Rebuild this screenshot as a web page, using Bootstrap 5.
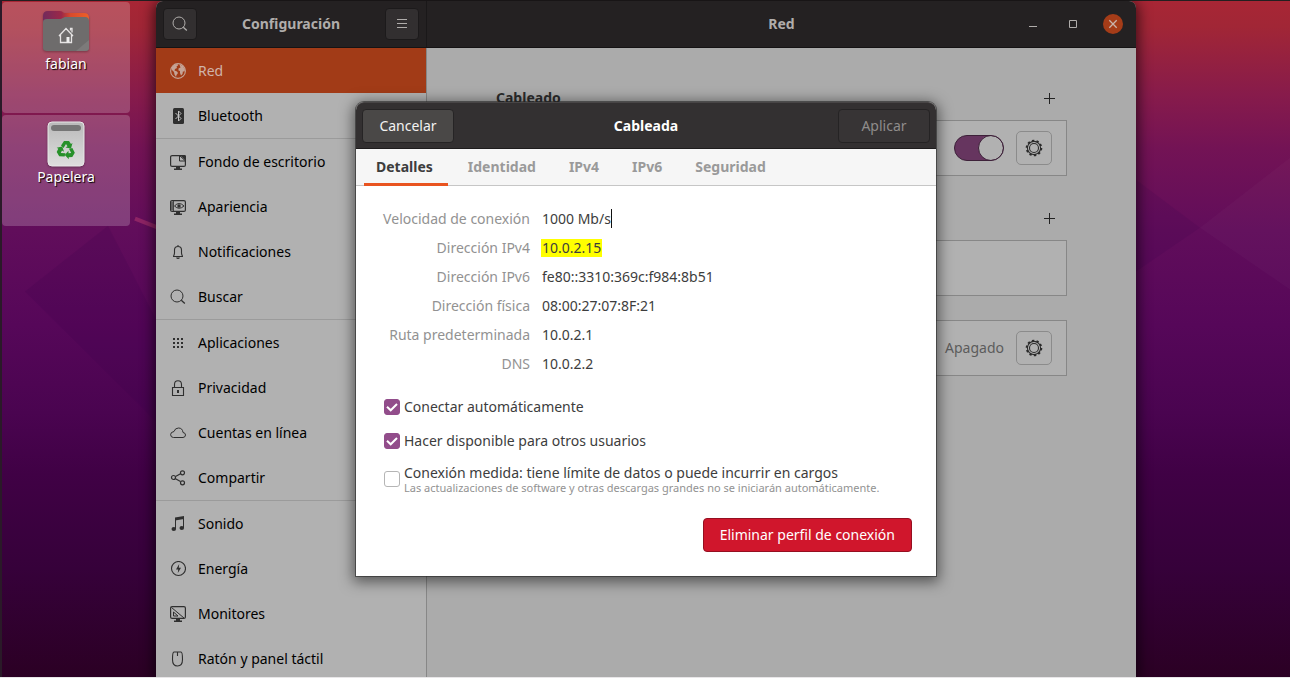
<!DOCTYPE html>
<html lang="es">
<head>
<meta charset="utf-8">
<meta name="viewport" content="width=device-width, initial-scale=1">
<title>Configuración - Red</title>
<link rel="stylesheet" href="https://cdn.jsdelivr.net/npm/bootstrap@5.3.0/dist/css/bootstrap.min.css">
<style>
  body { font: 14px/20px "Noto Sans", "Open Sans", sans-serif; color: #000; background: #2c0025; }
  .desktop {
    height: 100vh; padding: 1px 154px 0 2px; overflow: hidden;
    border-bottom: 1px solid #e8e6e8;
    background: linear-gradient(180deg, #a82635 0%, #a12636 4%, #871b4b 14%, #731355 22%, #610d5b 34%, #560759 48%, #4a0450 61%, #400145 70%, #36013a 84%, #2b0024 100%);
  }
  .topline { height: 1px; background: #231f20; }
  .edge { width: 2px; background: #2a1a28; }
  .facets { width: 100%; height: 100%; }
  .shortcuts { width: 154px; gap: 2px; padding-top: 1px; }
  .shortcut { width: 128px; height: 111px; background: rgba(255,255,255,.2); border-radius: 4px; color: #fff; text-shadow: 1px 1px 1px #000; padding-top: 6px; }
  .shortcut svg { filter: drop-shadow(0 1px 1px rgba(0,0,0,.3)); }
  .app { min-width: 0; background: #ababab; border-radius: 7px 7px 0 0; box-shadow: 0 2px 14px 2px rgba(0,0,0,.65); }
  .bar { height: 47px; background: #242122; border-bottom: 1px solid #151314; color: #b0adab; font-weight: 700; }
  .bar-left { width: 271px; border-right: 1px solid #1a1819; padding: 0 7px; border-top-left-radius: 7px; }
  .bar-right { border-top-right-radius: 7px; padding: 0 13px; }
  .wincontrols { gap: 20px; }
  .toolbtn { width: 34px; height: 32px; background: #322f30; border: 1px solid #1c1a1b; border-radius: 4px; color: #b0adab; padding: 0; }
  .winbtn { width: 20px; height: 20px; border: 0; padding: 0; background: none; color: #b0adab; border-radius: 50%; }
  .winbtn.shut { background: #a53c18; color: #c9b4ab; }
  .side { width: 271px; background: #b1b1b1; border-right: 1px solid #878787; }
  .side a { height: 45px; padding-left: 14px; gap: 12px; color: #000; text-decoration: none; }
  .side a svg { color: #2f2f2f; }
  .side a.current { background: #a23b17; color: #d0b4aa; }
  .side a.current svg { color: #c5a497; }
  .side .rule { height: 1px; background: #9b9b9b; }
  .panel { width: 571px; max-width: 100%; padding-top: 28px; }
  .headrow { height: 44px; color: #2b2b2b; font-weight: 700; padding-right: 9px; }
  .headrow.later { margin-top: 20px; }
  .plus { width: 17px; height: 17px; padding: 0; border: 0; background: none; color: #222; }
  .device { height: 56px; border: 1px solid #878787; background: #b1b1b1; padding-right: 14px; gap: 12px; color: #5c5c5c; }
  .gearbtn { width: 36px; height: 34px; border: 1px solid #8b8b8b; border-radius: 5px; background: #b1b1b1; color: #2b2b2b; padding: 0; }
  .form-check-input.toggle { width: 50px; height: 26px; margin: 0; border: 1px solid #3d2139; border-radius: 13px; background-color: #66355f;
    background-image: url("data:image/svg+xml,%3csvg xmlns='http://www.w3.org/2000/svg' viewBox='0 0 26 26'%3e%3ccircle cx='13' cy='13' r='12.5' fill='%23b1b1b1' stroke='%233d2139'/%3e%3c/svg%3e");
    background-size: 26px 26px; background-position: right center; background-origin: border-box; background-repeat: no-repeat; }
  .dialog { top: 101px; left: 0; right: 0; margin: 0 auto; width: 580px; max-width: 100%; background: #fff; color: #3d3d3d; border-radius: 8px 8px 0 0;
    box-shadow: 0 0 0 1px rgba(40,40,40,.6), 0 3px 14px 3px rgba(0,0,0,.5); }
  .dialog-bar { height: 47px; padding: 0 6px; background: #333031; border-bottom: 1px solid #1e1c1d; border-top: 1px solid #484546; border-radius: 8px 8px 0 0; color: #fff; font-weight: 700; }
  .dialog-bar .btn, .btn-drop { font-size: 14px; line-height: 20px; border-radius: 4px; }
  .btn-cancel { width: 92px; height: 34px; padding: 0; background: #4a4847; border: 1px solid #262425; color: #f3f2f1; }
  .btn-apply, .btn-apply:disabled { width: 92px; height: 34px; padding: 0; background: #373435; border: 1px solid #252324; color: #8f8c8b; opacity: 1; }
  .tabs { height: 37px; padding: 0 8px; gap: 8px; background: #f6f6f6; border-bottom: 1px solid #c6c6c6; }
  .tabs .nav-link { height: 37px; padding: 8px 13px 6px 12px; border: 0; border-bottom: 3px solid transparent; background: none; border-radius: 0; color: #9a9a9a; font-weight: 700; line-height: 20px; }
  .tabs .nav-link.active { color: #3d3d3d; background: none; border-bottom-color: #e95420; padding-right: 15px; }
  .facts { display: grid; grid-template-columns: 174px 1fr; column-gap: 12px; grid-auto-rows: 29px; align-items: center; padding-top: 18px; margin: 0; }
  .facts dt { text-align: right; font-weight: 400; color: #929292; }
  .facts dd { margin: 0; }
  .hilite { background: #ff0; padding: 0 1px; margin-left: -1px; line-height: 18px; display: inline-block; }
  .caret { border-right: 1px solid #111; }
  .options { padding: 18px 28px 0; gap: 13px; }
  .options .item { gap: 4px; line-height: 21px; }
  .options .form-check-input { width: 16px; height: 16px; margin: 0; border: 1px solid #b5b5b5; border-radius: 3px; flex: none; }
  .options .form-check-input:checked { background-color: #924d8b; border-color: #924d8b; background-size: 16px 16px;
    background-image: url("data:image/svg+xml,%3csvg xmlns='http://www.w3.org/2000/svg' viewBox='0 0 16 16'%3e%3cpath d='M3 7.700 6.700 11.300 13 5' fill='none' stroke='%23fff' stroke-width='2'/%3e%3c/svg%3e"); }
  .options .main { line-height: 18px; }
  .options .note { font-size: 11px; line-height: 12px; color: #929292; }
  .actions { padding: 24px; }
  .btn-drop { height: 34px; padding: 0 16px; background: #d0162c; border: 1px solid #950f20; color: #fff; }
</style>
</head>
<body>
<svg width="0" height="0" class="position-absolute" aria-hidden="true">
  <symbol id="lens" viewBox="0 0 16 16"><circle cx="7" cy="7" r="6" fill="none" stroke="currentColor"/><path d="M11.3 11.3 14.8 14.5" stroke="currentColor" stroke-width="1.3"/></symbol>
  <symbol id="gear" viewBox="0 0 18 18"><g fill="none" stroke="currentColor"><circle cx="9" cy="9" r="7.3" stroke-width="2" stroke-dasharray="2.3 2.29"/><circle cx="9" cy="9" r="6.6" stroke-width="1.1"/><circle cx="9" cy="9" r="4.5" stroke-width="1.1"/></g></symbol>
  <symbol id="add" viewBox="0 0 17 17"><path d="M8.5 3v11M3 8.5h11" stroke="currentColor"/></symbol>
</svg>
<div class="desktop d-flex position-relative">
  <svg class="facets position-absolute top-0 start-0" viewBox="0 0 1290 678" preserveAspectRatio="none" aria-hidden="true">
    <path d="M108 226 156 320V422L25 292Z" fill="#35004a" opacity=".16"/>
    <path d="M1200 228 1290 158V290Z" fill="#fff" opacity=".025"/>
    <path d="M1136 180 1200 228 1136 272Z" fill="#35004a" opacity=".12"/>
    <path d="M135 219 158 228" stroke="#8e2465" stroke-width="4"/>
  </svg>
  <div class="topline position-absolute top-0 start-0 w-100"></div>
  <div class="edge position-absolute top-0 start-0 h-100"></div>

  <div class="shortcuts d-flex flex-column flex-shrink-0 position-relative">
    <div class="shortcut d-flex flex-column align-items-center">
      <svg width="48" height="46" viewBox="0 0 48 46">
        <defs><linearGradient id="fold"><stop offset="0" stop-color="#722a5c"/><stop offset=".4" stop-color="#9c2848"/><stop offset=".6" stop-color="#d94a2c"/><stop offset="1" stop-color="#ee6028"/></linearGradient></defs>
        <path d="M1 8q0-5 5-5h12q2 0 4 2h20q5 0 5 5v12H1z" fill="url(#fold)"/>
        <path d="M1 14q0-3 4-3h12c4 0 4-2 7-2h19q4 0 4 4v27q0 3-4 3H5q-4 0-4-3z" fill="#6e6c6c"/>
        <path d="M47 32v8q0 3-4 3H34z" fill="#7c7a7a"/>
        <path d="m17 28 7-7.500 7 7.500M18.500 27v7.500h11V27M28.500 22.500v-2h1.500v4" fill="none" stroke="#e6e4e4" stroke-width="1.300"/><path d="M24.500 29h3v5.500h-3z" fill="#eee"/>
      </svg>
      <span>fabian</span>
    </div>
    <div class="shortcut d-flex flex-column align-items-center">
      <svg width="48" height="46" viewBox="0 0 48 46">
        <defs><linearGradient id="bin" x2="0" y2="1"><stop offset="0" stop-color="#b9b9b9"/><stop offset="1" stop-color="#dedede"/></linearGradient></defs>
        <rect x="6" y="1" width="36" height="44" rx="4" fill="url(#bin)" stroke="#e8e8e8"/>
        <rect x="9" y="4" width="30" height="6" rx="3" fill="#767676"/>
        <g fill="#27912a"><g id="arm"><path d="m19 24.500 3-4.500h5l2 3 1.500-1-1.500 5.500-5.500-1 2-1.300-1.500-2.200-2.500 4z"/></g><use href="#arm" transform="rotate(120 24 29)"/><use href="#arm" transform="rotate(240 24 29)"/></g>
      </svg>
      <span>Papelera</span>
    </div>
  </div>

  <main class="app flex-grow-1 position-relative d-flex flex-column">
    <header class="d-flex flex-shrink-0">
      <div class="bar bar-left d-flex align-items-center justify-content-between">
        <button class="toolbtn d-flex align-items-center justify-content-center" aria-label="Buscar"><svg width="16" height="16"><use href="#lens"/></svg></button>
        <span>Configuración</span>
        <button class="toolbtn d-flex align-items-center justify-content-center" aria-label="Menú"><svg width="16" height="16" viewBox="0 0 16 16"><path d="M3 3.500h10M3 7.500h10M3 11.500h10" stroke="currentColor"/></svg></button>
      </div>
      <div class="bar bar-right d-flex align-items-center flex-grow-1">
        <div class="col"></div>
        <span>Red</span>
        <div class="wincontrols col d-flex justify-content-end">
          <button class="winbtn" aria-label="Minimizar"><svg class="d-block" width="20" height="20" viewBox="0 0 20 20"><path d="M6 12.500h8" stroke="currentColor"/></svg></button>
          <button class="winbtn" aria-label="Maximizar"><svg class="d-block" width="20" height="20" viewBox="0 0 20 20"><path d="M6.500 6.500h7v7h-7z" fill="none" stroke="currentColor"/></svg></button>
          <button class="winbtn shut" aria-label="Cerrar"><svg class="d-block" width="20" height="20" viewBox="0 0 20 20"><path d="m6.300 6.300 7.400 7.400m0-7.400-7.400 7.400" stroke="currentColor" stroke-width="1.300"/></svg></button>
        </div>
      </div>
    </header>

    <div class="d-flex flex-grow-1 overflow-hidden">
      <nav class="side flex-shrink-0" aria-label="Secciones">
        <a href="#" class="current d-flex align-items-center"><svg width="16" height="16" viewBox="0 0 16 16"><circle cx="8" cy="8" r="7.400" fill="none" stroke="currentColor" stroke-width="1.100"/><path d="M2 4 5 1.500 7.500 1 8 2.500 6.500 3.500 7 5 5 6 4.500 7.500 7 8.500 8 10 6.500 12 6 14 4.500 11.500 4 9 2 7zM9.500 1.500 13 3 15 7l-1 2-1-1-.5 3-1.500 1.500-1-2.500V8L8.500 7.500 8.500 5.500 10.500 4.500z" fill="currentColor"/></svg><span>Red</span></a>
        <a href="#" class="d-flex align-items-center"><svg width="16" height="16" viewBox="0 0 16 16"><rect x="3" width="11" height="16" rx="1.500" fill="currentColor"/><path d="m5.500 5 5.500 5.500L8.500 13V3L11 5.500 5.500 11" fill="none" stroke="#c4c4c4"/></svg><span>Bluetooth</span></a>
        <div class="rule"></div>
        <a href="#" class="d-flex align-items-center"><svg width="16" height="16" viewBox="0 0 16 16"><rect x=".6" y="1.600" width="14.800" height="10.800" rx="1.500" fill="none" stroke="currentColor" stroke-width="1.200"/><path d="M9.500 1.500v5.500h6z" fill="#b1b1b1" stroke="currentColor"/><path d="M10 1h4.500q1.500 0 1.500 1.500V7zM6 13h4v1.500h2V16H4v-1.500h2z" fill="currentColor"/></svg><span>Fondo de escritorio</span></a>
        <a href="#" class="d-flex align-items-center"><svg width="16" height="16" viewBox="0 0 16 16"><rect x=".6" y="1.600" width="14.800" height="10.800" rx="1.500" fill="none" stroke="currentColor" stroke-width="1.200"/><path d="M3.300 2v10M1 4h2.300M1 6h2.300M1 8h2.300M1 10h2.300" stroke="currentColor"/><path d="M4.500 7q4.500-5 9.500 0-5 4.500-9.500 0z" fill="none" stroke="currentColor"/><circle cx="9" cy="7" r="1.700" fill="currentColor"/><path d="M6 13h4v1.500h2V16H4v-1.500h2z" fill="currentColor"/></svg><span>Apariencia</span></a>
        <a href="#" class="d-flex align-items-center"><svg width="16" height="16" viewBox="0 0 16 16"><path d="M3.500 12q1-1.500 1-3V6Q4.500 2.500 8 2.500T11.500 6v3q0 1.500 1 3M3 12.500h10M8 1v1.500" fill="none" stroke="currentColor" stroke-width="1.100"/><path d="M6 13.500h4Q9.500 15 8 15T6 13.500z" fill="currentColor"/></svg><span>Notificaciones</span></a>
        <a href="#" class="d-flex align-items-center"><svg width="16" height="16"><use href="#lens"/></svg><span>Buscar</span></a>
        <div class="rule"></div>
        <a href="#" class="d-flex align-items-center"><svg width="16" height="16" viewBox="0 0 16 16"><path d="M3 4h10M3 8h10M3 12h10" stroke="currentColor" stroke-width="2" stroke-dasharray="2 2"/></svg><span>Aplicaciones</span></a>
        <a href="#" class="d-flex align-items-center"><svg width="16" height="16" viewBox="0 0 16 16"><path d="M2.500 7.500h11v8h-11zM4.500 7.500V4.500q0-3.800 3.500-3.800t3.500 3.800v3" fill="none" stroke="currentColor" stroke-width="1.100"/><path d="M7 10h2v3H7z" fill="currentColor"/></svg><span>Privacidad</span></a>
        <a href="#" class="d-flex align-items-center"><svg width="16" height="16" viewBox="0 0 16 16"><path d="M3.500 12.500h9.500q2.500-.3 2.500-2.500T13 7.500Q12.500 3 8.500 3 5 3 4 6.500.6 7 .6 9.700.8 12.500 3.500 12.500z" fill="none" stroke="currentColor"/></svg><span>Cuentas en línea</span></a>
        <a href="#" class="d-flex align-items-center"><svg width="16" height="16" viewBox="0 0 16 16"><g fill="none" stroke="currentColor" stroke-width="1.200"><circle cx="3.500" cy="7.500" r="2"/><circle cx="12.500" cy="2.800" r="2"/><circle cx="12.500" cy="12.800" r="2"/><path d="m5.500 6.500 5-2.700m-5 5 5 2.800"/></g></svg><span>Compartir</span></a>
        <div class="rule"></div>
        <a href="#" class="d-flex align-items-center"><svg width="16" height="16" viewBox="0 0 16 16"><path d="M5 1.500 14 0v3L5 4.500z" fill="currentColor"/><path d="M5.500 3v10M13.500 2v10" stroke="currentColor"/><ellipse cx="3.800" cy="13" rx="2.300" ry="2" fill="currentColor"/><ellipse cx="11.800" cy="12" rx="2.300" ry="2" fill="currentColor"/></svg><span>Sonido</span></a>
        <a href="#" class="d-flex align-items-center"><svg width="16" height="16" viewBox="0 0 16 16"><circle cx="8.500" cy="7.500" r="7" fill="none" stroke="currentColor" stroke-width="1.100"/><path d="M9.200 3 6 8.500h2.200L7.800 12 11 6.800H8.800z" fill="currentColor"/></svg><span>Energía</span></a>
        <a href="#" class="d-flex align-items-center"><svg width="16" height="16" viewBox="0 0 16 16"><rect x=".6" y=".6" width="14.800" height="11.800" rx="1.500" fill="none" stroke="currentColor" stroke-width="1.200"/><path d="m1.500 1.500 12.500 10.500M3.500 6v4h4.500z" fill="none" stroke="currentColor"/><path d="M6 13h4v1.500h2V16H4v-1.500h2z" fill="currentColor"/></svg><span>Monitores</span></a>
        <a href="#" class="d-flex align-items-center"><svg width="16" height="16" viewBox="0 0 16 16"><path d="M4 1h7q1.500 0 1.500 7.500 0 6.500-5 6.500t-5-6.500Q2.500 1 4 1zM7.500 1v4" fill="none" stroke="currentColor" stroke-width="1.100"/></svg><span>Ratón y panel táctil</span></a>
      </nav>

      <section class="flex-grow-1">
        <div class="panel mx-auto">
          <div class="headrow d-flex align-items-center justify-content-between"><span>Cableado</span><button class="plus" aria-label="Añadir conexión cableada"><svg class="d-block" width="17" height="17"><use href="#add"/></svg></button></div>
          <div class="device d-flex align-items-center justify-content-end">
            <input class="form-check-input toggle" type="checkbox" role="switch" aria-label="Cableado" checked>
            <button class="gearbtn d-flex align-items-center justify-content-center" aria-label="Opciones de Cableado"><svg width="18" height="18"><use href="#gear"/></svg></button>
          </div>
          <div class="headrow later d-flex align-items-center justify-content-end"><button class="plus" aria-label="Añadir VPN"><svg class="d-block" width="17" height="17"><use href="#add"/></svg></button></div>
          <div class="device"></div>
          <div class="device d-flex align-items-center justify-content-end mt-4">
            <span>Apagado</span>
            <button class="gearbtn d-flex align-items-center justify-content-center" aria-label="Opciones del proxy"><svg width="18" height="18"><use href="#gear"/></svg></button>
          </div>
        </div>
      </section>
    </div>

    <div class="dialog position-absolute" role="dialog" aria-labelledby="dlg-title">
      <div class="dialog-bar d-flex align-items-center">
        <div class="col"><button class="btn btn-cancel">Cancelar</button></div>
        <span id="dlg-title">Cableada</span>
        <div class="col text-end"><button class="btn btn-apply" disabled>Aplicar</button></div>
      </div>
      <div class="tabs nav" role="tablist">
        <button class="nav-link active" role="tab">Detalles</button>
        <button class="nav-link" role="tab">Identidad</button>
        <button class="nav-link" role="tab">IPv4</button>
        <button class="nav-link" role="tab">IPv6</button>
        <button class="nav-link" role="tab">Seguridad</button>
      </div>
      <dl class="facts">
        <dt>Velocidad de conexión</dt><dd><span class="caret">1000 Mb/s</span></dd>
        <dt>Dirección IPv4</dt><dd><span class="hilite">10.0.2.15</span></dd>
        <dt>Dirección IPv6</dt><dd>fe80::3310:369c:f984:8b51</dd>
        <dt>Dirección física</dt><dd>08:00:27:07:8F:21</dd>
        <dt>Ruta predeterminada</dt><dd>10.0.2.1</dd>
        <dt>DNS</dt><dd>10.0.2.2</dd>
      </dl>
      <div class="options d-flex flex-column">
        <div class="item d-flex align-items-center"><input class="form-check-input" type="checkbox" id="auto" checked><label for="auto">Conectar automáticamente</label></div>
        <div class="item d-flex align-items-center"><input class="form-check-input" type="checkbox" id="share" checked><label for="share">Hacer disponible para otros usuarios</label></div>
        <div class="item d-flex align-items-center"><input class="form-check-input" type="checkbox" id="metered"><label for="metered"><span class="d-block main">Conexión medida: tiene límite de datos o puede incurrir en cargos</span><span class="d-block note">Las actualizaciones de software y otras descargas grandes no se iniciarán automáticamente.</span></label></div>
      </div>
      <div class="actions text-end"><button class="btn btn-drop">Eliminar perfil de conexión</button></div>
    </div>
  </main>
</div>
<script src="https://cdn.jsdelivr.net/npm/bootstrap@5.3.0/dist/js/bootstrap.bundle.min.js"></script>
</body>
</html>
